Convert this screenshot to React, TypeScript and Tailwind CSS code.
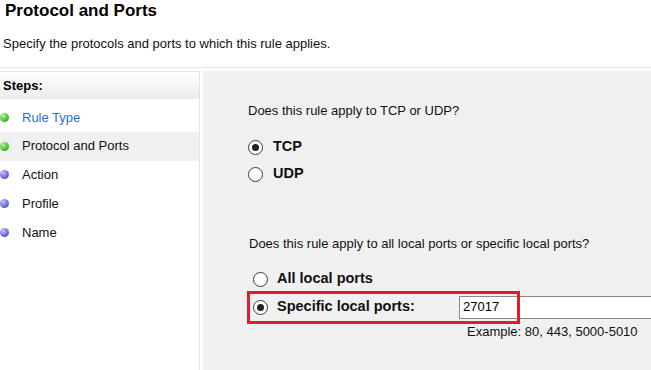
import React from "react";

function Radio({ checked }: { checked?: boolean }) {
  return (
    <span className="w-[15px] h-[15px] rounded-full border border-[#3a3a3a] bg-white flex items-center justify-center shrink-0">
      {checked && <span className="w-[7px] h-[7px] rounded-full bg-[#222222]" />}
    </span>
  );
}

function Bullet({ done }: { done: boolean }) {
  return (
    <span
      className={
        "w-[9px] h-[9px] rounded-full shrink-0 " +
        (done
          ? "bg-[radial-gradient(circle_at_35%_30%,#b6f29a,#4dbb2c_60%,#2f8f18)]"
          : "bg-[radial-gradient(circle_at_35%_30%,#c4c4f4,#6a66d6_60%,#4742b0)]")
      }
    />
  );
}

export default function App() {
  const steps = [
    { label: "Rule Type", done: true, link: true },
    { label: "Protocol and Ports", done: true, active: true },
    { label: "Action", done: false },
    { label: "Profile", done: false },
    { label: "Name", done: false },
  ];
  return (
    <div className="w-[651px] h-[370px] bg-white overflow-hidden relative text-black font-['Liberation_Sans',Arial,sans-serif]">
      <div className="h-[68px] border-b border-[#e8e8e8]">
        <div className="pl-[5px] pt-[1px] text-[17px] leading-[20px] font-bold">Protocol and Ports</div>
        <div className="pl-[3px] mt-[15px] text-[13px] leading-[16px] text-[#111]">
          Specify the protocols and ports to which this rule applies.
        </div>
      </div>
      <div className="flex mt-[3px] h-[299px] gap-[3px]">
        <div className="w-[200px] shrink-0 border-t border-r border-[#e3e3e3] bg-white">
          <div className="h-[27px] flex items-center pl-[3px] text-[13px] font-bold bg-gradient-to-b from-white to-[#ececec]">
            Steps:
          </div>
          <div className="pt-[4px]">
            {steps.map((s) => (
              <div
                key={s.label}
                className={
                  "h-[28.75px] flex items-center pl-[0px] text-[13px] " +
                  (s.active ? "bg-[#f0f0f0]" : "")
                }
              >
                <Bullet done={s.done} />
                <span className={"ml-[13px] " + (s.link ? "text-[#3070c8]" : "text-[#111]")}>{s.label}</span>
              </div>
            ))}
          </div>
        </div>
        <div className="flex-1 min-w-0 bg-[#f0f0f0] pl-[45px] pt-[32px] text-[13px] text-[#111]">
          <div className="leading-[16px]">Does this rule apply to TCP or UDP?</div>
          <div className="mt-[14.5px]">
            <div className="h-[27px] flex items-center">
              <Radio checked />
              <span className="ml-[10px] text-[14.5px] font-bold">TCP</span>
            </div>
            <div className="h-[27px] flex items-center">
              <Radio />
              <span className="ml-[10px] text-[14.5px] font-bold">UDP</span>
            </div>
          </div>
          <div className="mt-[48.5px] leading-[16px] pl-[1px]">
            Does this rule apply to all local ports or specific local ports?
          </div>
          <div className="mt-[13px] pl-[5px] relative">
            <div className="h-[28px] flex items-center">
              <Radio />
              <span className="ml-[9px] text-[14.5px] font-bold">All local ports</span>
            </div>
            <div className="h-[28px] flex items-center">
              <Radio checked />
              <span className="ml-[9px] w-[182px] shrink-0 text-[14.5px] font-bold">Specific local ports:</span>
              <div className="w-[240px] shrink-0 h-[23px] bg-white border border-[#8a8a8a] flex items-center pl-[3px] text-[13px] text-black">
                27017
              </div>
            </div>
            <div className="absolute left-[-1px] top-[26px] w-[273px] h-[33px] border-[3px] border-[#e11d2a] pointer-events-none" />
          </div>
          <div className="mt-[3px] ml-[219px] leading-[16px] whitespace-nowrap">Example: 80, 443, 5000-5010</div>
        </div>
      </div>
    </div>
  );
}
